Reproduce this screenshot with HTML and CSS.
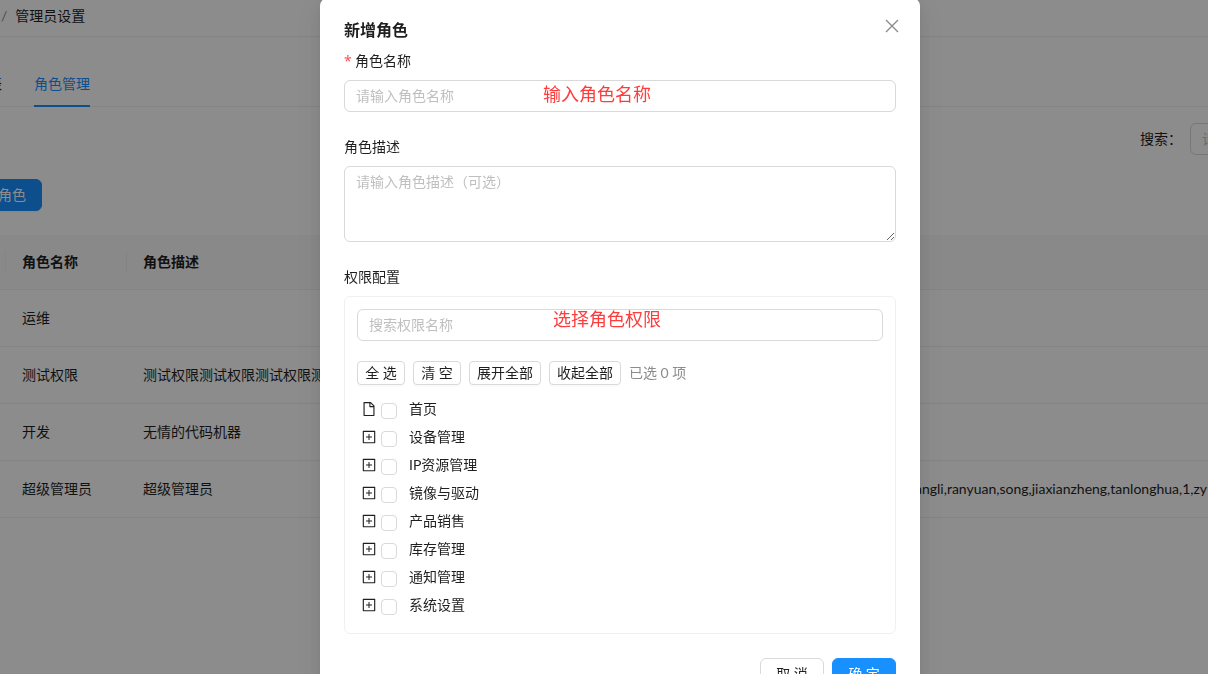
FILE: index.html
```html
<!DOCTYPE html>
<html lang="zh-CN">
<head>
<meta charset="utf-8">
<title>管理员设置</title>
<link rel="stylesheet" href="styles.css">
</head>
<body>
<svg class="sprite" aria-hidden="true">
  <symbol id="plus-square" viewBox="64 64 896 896"><path d="M328 544h152v152c0 4.400 3.600 8 8 8h48c4.400 0 8-3.600 8-8V544h152c4.400 0 8-3.600 8-8v-48c0-4.400-3.600-8-8-8H544V328c0-4.400-3.600-8-8-8h-48c-4.400 0-8 3.600-8 8v152H328c-4.400 0-8 3.600-8 8v48c0 4.400 3.600 8 8 8z"/><path d="M880 112H144c-17.700 0-32 14.300-32 32v736c0 17.700 14.300 32 32 32h736c17.700 0 32-14.300 32-32V144c0-17.700-14.300-32-32-32zm-40 728H184V184h656v656z"/></symbol>
  <symbol id="file" viewBox="64 64 896 896"><path d="M854.600 288.600L639.400 73.400c-6-6-14.100-9.400-22.600-9.400H192c-17.700 0-32 14.300-32 32v832c0 17.700 14.300 32 32 32h640c17.700 0 32-14.300 32-32V311.300c0-8.500-3.400-16.700-9.400-22.700zM790.200 326H602V137.800L790.200 326zm1.800 562H232V136h302v216a42 42 0 0 0 42 42h216v494z"/></symbol>
</svg>

<div class="page">
  <main class="shell">
    <nav class="crumbs" aria-label="面包屑">
      <a class="crumb-link" href="#">系统设置</a><span class="crumb-sep">/</span><span>管理员设置</span>
    </nav>
    <nav class="tabs">
      <a class="tab" href="#">管理员列表</a>
      <a class="tab tab-active" href="#">角色管理</a>
    </nav>
    <div class="search-row">
      <label for="search">搜索：</label>
      <input class="field search-field" id="search" type="text" placeholder="请输入">
    </div>
    <div class="toolbar">
      <button class="btn btn-primary btn-add" type="button">
        <svg class="icon" viewBox="0 0 14 14" aria-hidden="true"><path d="M7 1v12M1 7h12" stroke="currentColor"/></svg>
        新增角色
      </button>
    </div>
    <table class="roles">
      <colgroup><col class="col-index"><col class="col-name"><col class="col-desc"><col></colgroup>
      <thead>
        <tr><th></th><th>角色名称</th><th>角色描述</th><th></th></tr>
      </thead>
      <tbody>
        <tr><td></td><td>运维</td><td></td><td></td></tr>
        <tr><td></td><td>测试权限</td><td>测试权限测试权限测试权限测试权限</td><td></td></tr>
        <tr><td></td><td>开发</td><td>无情的代码机器</td><td></td></tr>
        <tr><td></td><td>超级管理员</td><td>超级管理员</td><td>angli,ranyuan,song,jiaxianzheng,tanlonghua,1,zy</td></tr>
      </tbody>
    </table>
  </main>
</div>

<div class="overlay">
  <form class="modal" role="dialog" aria-labelledby="modal-title">
    <h2 class="modal-title" id="modal-title">新增角色</h2>
    <button class="close" type="button" aria-label="关闭">
      <svg class="close-icon" viewBox="0 0 16 16" aria-hidden="true"><path d="M2 2l12 12M14 2L2 14" stroke="currentColor" stroke-width="1.400"/></svg>
    </button>

    <div class="form-item">
      <label class="form-label" for="role-name"><span class="required">*</span>角色名称</label>
      <div class="control">
        <input class="field" id="role-name" type="text" placeholder="请输入角色名称">
        <span class="note note-name">输入角色名称</span>
      </div>
    </div>

    <div class="form-item">
      <label class="form-label" for="role-desc">角色描述</label>
      <textarea class="field area" id="role-desc" rows="3" placeholder="请输入角色描述（可选）"></textarea>
    </div>

    <div class="form-item">
      <label class="form-label" for="perm-search">权限配置</label>
      <div class="panel">
        <div class="control">
          <input class="field" id="perm-search" type="text" placeholder="搜索权限名称">
          <span class="note note-perm">选择角色权限</span>
        </div>
        <div class="actions">
          <button class="btn btn-small" type="button">全 选</button>
          <button class="btn btn-small" type="button">清 空</button>
          <button class="btn btn-small" type="button">展开全部</button>
          <button class="btn btn-small" type="button">收起全部</button>
          <span class="count">已选 0 项</span>
        </div>
        <ul class="tree">
          <li class="node"><span class="switcher"><svg class="icon" aria-hidden="true"><use href="#file"/></svg></span><label class="node-label"><input class="check" type="checkbox">首页</label></li>
          <li class="node"><button class="switcher" type="button" aria-label="展开"><svg class="icon" aria-hidden="true"><use href="#plus-square"/></svg></button><label class="node-label"><input class="check" type="checkbox">设备管理</label></li>
          <li class="node"><button class="switcher" type="button" aria-label="展开"><svg class="icon" aria-hidden="true"><use href="#plus-square"/></svg></button><label class="node-label"><input class="check" type="checkbox">IP资源管理</label></li>
          <li class="node"><button class="switcher" type="button" aria-label="展开"><svg class="icon" aria-hidden="true"><use href="#plus-square"/></svg></button><label class="node-label"><input class="check" type="checkbox">镜像与驱动</label></li>
          <li class="node"><button class="switcher" type="button" aria-label="展开"><svg class="icon" aria-hidden="true"><use href="#plus-square"/></svg></button><label class="node-label"><input class="check" type="checkbox">产品销售</label></li>
          <li class="node"><button class="switcher" type="button" aria-label="展开"><svg class="icon" aria-hidden="true"><use href="#plus-square"/></svg></button><label class="node-label"><input class="check" type="checkbox">库存管理</label></li>
          <li class="node"><button class="switcher" type="button" aria-label="展开"><svg class="icon" aria-hidden="true"><use href="#plus-square"/></svg></button><label class="node-label"><input class="check" type="checkbox">通知管理</label></li>
          <li class="node"><button class="switcher" type="button" aria-label="展开"><svg class="icon" aria-hidden="true"><use href="#plus-square"/></svg></button><label class="node-label"><input class="check" type="checkbox">系统设置</label></li>
        </ul>
      </div>
    </div>

    <div class="modal-footer">
      <button class="btn" type="button">取 消</button>
      <button class="btn btn-primary" type="submit">确 定</button>
    </div>
  </form>
</div>
</body>
</html>
```

FILE: styles.css
```css
* {
  box-sizing: border-box;
}

body {
  margin: 0;
  color: #1f1f1f;
  background: #fff;
  font: 14px/22px Lato, "Noto Sans CJK SC", sans-serif;
}

button,
input,
textarea {
  font: inherit;
  color: inherit;
}

.sprite {
  display: none;
}

/* Page behind the dialog */

.page {
  height: 100vh;
  overflow: hidden;
}

.shell {
  margin: 0 -182px 0 -68px;
}

.crumbs {
  display: flex;
  gap: 8px;
  padding: 5px 5px 9px;
  border-bottom: 1px solid #f0f0f0;
}

.crumb-link,
.crumb-sep {
  color: #8c8c8c;
  text-decoration: none;
}

.tabs {
  display: flex;
  gap: 32px;
  margin-top: 24px;
  border-bottom: 1px solid #f0f0f0;
}

.tab {
  margin-bottom: -1px;
  padding: 12px 0 10px;
  color: inherit;
  text-decoration: none;
  border-bottom: 2px solid transparent;
}

.tab-active {
  color: #1890ff;
  border-color: #1890ff;
}

.search-row {
  display: flex;
  justify-content: flex-end;
  align-items: center;
  gap: 8px;
  padding-top: 16px;
}

.toolbar {
  padding: 24px 0;
}

.roles {
  width: 100%;
  table-layout: fixed;
  border-collapse: separate;
  border-spacing: 0;
}

.col-index {
  width: 74px;
}

.col-name {
  width: 121px;
}

.col-desc {
  width: 772px;
}

.roles th,
.roles td {
  padding: 16px;
  text-align: left;
  white-space: nowrap;
  border-bottom: 1px solid #f0f0f0;
}

.roles td {
  height: 57px;
}

.roles th {
  height: 55px;
  font-weight: 600;
  background: linear-gradient(#f0f0f0, #f0f0f0) right center / 1px 22px no-repeat #fafafa;
}

.roles th:last-child {
  background: #fafafa;
}

/* Shared controls */

.field {
  display: block;
  width: 100%;
  height: 32px;
  padding: 3px 11px 5px;
  background: #fff;
  border: 1px solid #d9d9d9;
  border-radius: 6px;
  outline: none;
}

.field::placeholder {
  color: #bfbfbf;
}

.search-field {
  width: 200px;
}

.area {
  height: auto;
  padding: 4px 11px;
  resize: vertical;
}

.btn {
  min-width: 64px;
  height: 32px;
  padding: 0 15px;
  background: #fff;
  border: 1px solid #d9d9d9;
  border-radius: 6px;
  box-shadow: 0 2px 0 rgba(0, 0, 0, 0.02);
  white-space: nowrap;
}

.btn-primary {
  color: #fff;
  background: #1890ff;
  border-color: #1890ff;
}

.btn-add {
  display: flex;
  align-items: center;
  gap: 8px;
}

.btn-small {
  min-width: 48px;
  height: 24px;
  padding: 0 7px;
  line-height: 22px;
  border-radius: 4px;
}

.icon {
  display: block;
  width: 14px;
  height: 14px;
  fill: currentColor;
}

/* Dialog */

.overlay {
  position: fixed;
  inset: 0;
  padding-left: 32px;
  overflow: auto;
  scrollbar-width: none;
  background: rgba(0, 0, 0, 0.45);
}

.modal {
  position: relative;
  max-width: 600px;
  margin: -2px auto 24px;
  padding: 20px 24px;
  background: #fff;
  border-radius: 8px;
  box-shadow: 0 6px 16px rgba(0, 0, 0, 0.08), 0 3px 6px -4px rgba(0, 0, 0, 0.12), 0 9px 28px 8px rgba(0, 0, 0, 0.05);
}

.modal-title {
  margin: 0 0 8px;
  font-size: 16px;
  line-height: 24px;
  font-weight: 600;
}

.close {
  position: absolute;
  top: 17px;
  right: 17px;
  display: grid;
  place-items: center;
  width: 22px;
  height: 22px;
  padding: 0;
  color: #8c8c8c;
  background: none;
  border: 0;
}

.close-icon {
  width: 16px;
  height: 16px;
}

.form-item {
  margin-bottom: 24px;
}

.form-label {
  display: flex;
  margin-bottom: 8px;
}

.required {
  width: 7px;
  margin-right: 4px;
  color: #ff4d4f;
  font-family: "Noto Sans", sans-serif;
}

.control {
  position: relative;
}

.note {
  position: absolute;
  color: #ff3b3b;
  font-size: 18px;
  line-height: 24px;
  pointer-events: none;
}

.note-name {
  top: 2px;
  left: 199px;
}

.note-perm {
  top: -2px;
  left: 196px;
}

.panel {
  padding: 12px;
  border: 1px solid #f0f0f0;
  border-radius: 6px;
}

.actions {
  display: flex;
  flex-wrap: wrap;
  align-items: center;
  gap: 8px;
  margin: 20px 0 12px;
}

.count {
  color: #8c8c8c;
}

.tree {
  margin: 0;
  padding: 0;
  list-style: none;
}

.node {
  display: flex;
  padding-bottom: 4px;
}

.switcher {
  display: grid;
  place-items: center;
  width: 24px;
  height: 24px;
  padding: 0;
  background: none;
  border: 0;
}

.node-label {
  display: flex;
  align-items: center;
  gap: 12px;
  line-height: 24px;
}

.check {
  appearance: none;
  width: 16px;
  height: 16px;
  margin: 4px 0 0;
  background: #fff;
  border: 1px solid #d9d9d9;
  border-radius: 4px;
}

.check:checked {
  background: #1890ff;
  border-color: #1890ff;
}

.modal-footer {
  display: flex;
  justify-content: flex-end;
  gap: 8px;
}
```
